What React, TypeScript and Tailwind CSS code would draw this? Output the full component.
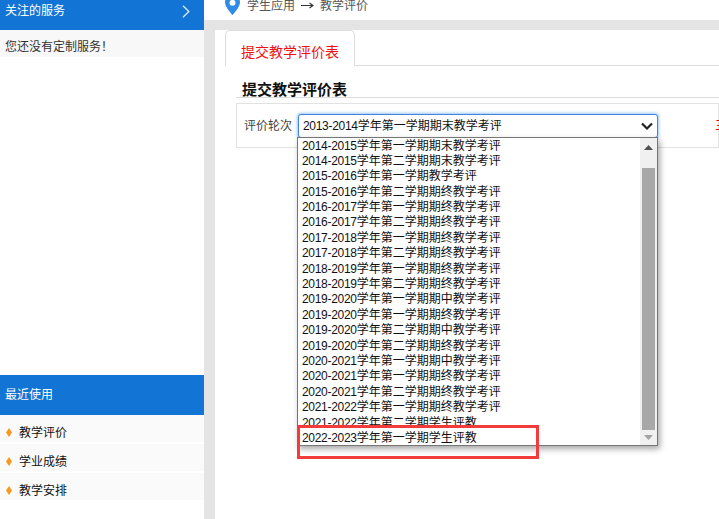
const FONT = "font-['Liberation_Sans','Noto_Sans_CJK_SC',sans-serif]"

const terms = [
  '2014-2015学年第一学期期末教学考评',
  '2014-2015学年第二学期期末教学考评',
  '2015-2016学年第一学期教学考评',
  '2015-2016学年第二学期期终教学考评',
  '2016-2017学年第一学期期终教学考评',
  '2016-2017学年第二学期期终教学考评',
  '2017-2018学年第一学期期终教学考评',
  '2017-2018学年第二学期期终教学考评',
  '2018-2019学年第一学期期终教学考评',
  '2018-2019学年第二学期期终教学考评',
  '2019-2020学年第一学期期中教学考评',
  '2019-2020学年第一学期期终教学考评',
  '2019-2020学年第二学期期中教学考评',
  '2019-2020学年第二学期期终教学考评',
  '2020-2021学年第一学期期中教学考评',
  '2020-2021学年第一学期期终教学考评',
  '2020-2021学年第二学期期终教学考评',
  '2021-2022学年第一学期期终教学考评',
  '2021-2022学年第二学期学生评教',
  '2022-2023学年第一学期学生评教',
]

function Term({ text }: { text: string }) {
  return (
    <>
      <span className="tracking-[-0.3px]">{text.slice(0, 9)}</span>
      {text.slice(9)}
    </>
  )
}

function Sidebar() {
  return (
    <div className="w-[204px] shrink-0 flex flex-col pb-[19px] bg-white">
      <div className="h-[30px] bg-[#1274d5] flex justify-between pl-[5px] pr-[14px] text-white">
        <span className="leading-[22px]">关注的服务</span>
        <svg width="8" height="13" viewBox="0 0 8 13" className="mt-[5px]" fill="none" stroke="#d5e7f8" strokeWidth="1.4">
          <path d="M1 .8l5.8 5.7L1 12.2" />
        </svg>
      </div>
      <div className="h-[27px] bg-[#f8f8f8] pl-[5px] leading-[34px] text-[#333]">您还没有定制服务！</div>
      <div className="flex-1" />
      <div className="h-[40px] bg-[#1274d5] pl-[5px] leading-[41px] text-white">最近使用</div>
      <div className="flex flex-col gap-[2px]">
        {['教学评价', '学业成绩', '教学安排'].map(name => (
          <div key={name} className="h-[27px] bg-[#fafafa] flex items-center pl-[6px] pt-[8px] text-[#111]">
            <span className="w-[6px] h-[9px] bg-[#f59a1c] mr-[7px] [clip-path:polygon(50%_0,100%_50%,50%_100%,0_50%)]" />
            {name}
          </div>
        ))}
      </div>
    </div>
  )
}

function Dropdown() {
  return (
    <div className="absolute left-[-2px] top-full w-[361px] h-[309px] bg-white border border-[#767676] shadow-[2px_3px_6px_rgba(0,0,0,0.35)] flex">
      <div className="flex-1 overflow-hidden pl-[4px] pt-[1px] text-[#111]">
        {terms.map(t => (
          <div key={t} className="h-[15.4px] leading-[15px] whitespace-nowrap"><Term text={t} /></div>
        ))}
      </div>
      <div className="w-[17px] bg-[#f0f0f0] flex flex-col items-center">
        <svg width="9" height="5" viewBox="0 0 9 5" className="mt-[7px]"><path d="M4.5 0L9 5H0z" fill="#505050" /></svg>
        <div className="w-[13px] h-[262px] bg-[#a8a8a8] mt-[18px]" />
        <svg width="9" height="5" viewBox="0 0 9 5" className="mt-[5px]"><path d="M0 0h9L4.5 5z" fill="#a3a3a3" /></svg>
      </div>
      {/* red annotation box drawn over the list */}
      <div className="absolute left-[-1px] top-[287px] w-[242px] h-[34px] border-[3px] border-[#f33b3b]" />
    </div>
  )
}

export default function App() {
  return (
    <div className={`w-[719px] h-[519px] flex overflow-hidden bg-white text-[12px] ${FONT}`}>
      <Sidebar />
      <div className="flex-1 min-w-0 flex flex-col">
        <div className="h-[20px] shrink-0 flex items-start pl-[21px] text-[#555] leading-[12px] overflow-hidden">
          <svg width="15" height="20" viewBox="0 0 15 20" className="-mt-[5px] shrink-0">
            <path fillRule="evenodd" fill="#2f8be6" d="M7.5 0C3.4 0 0 3.3 0 7.4 0 12 7.5 20 7.5 20S15 12 15 7.4C15 3.3 11.6 0 7.5 0zm0 4.8a3 3 0 1 1 0 6 3 3 0 0 1 0-6z" />
          </svg>
          <span className="ml-[7px]">学生应用</span>
          <svg width="13" height="7" viewBox="0 0 13 7" className="ml-[6px] mt-[2px] shrink-0" fill="none" stroke="#333" strokeWidth="1.1">
            <path d="M0 3.5h12M8.5 1l3.5 2.5L8.5 6" />
          </svg>
          <span className="ml-[6px]">教学评价</span>
        </div>
        <div className="flex-1 min-h-0 flex flex-col bg-[#e4e4e4] pt-[10px] pl-[11px]">
          <div className="flex-1 min-h-0 bg-white pl-[10px]">
            <div className="flex h-[36px] border-b border-[#ddd]">
              <div className="w-[130px] h-[36px] bg-white border border-b-0 border-[#ddd] rounded-t-[5px] text-[14px] text-[#f01010] pl-[15px] pt-[12px] leading-[18px]">
                提交教学评价表
              </div>
            </div>
            <div className="ml-[11px]">
              <div className="h-[32px] border-b border-[#ddd] pl-[6px] pt-[15px] text-[15px] leading-[17px] font-bold text-[#111]">
                提交教学评价表
              </div>
              <div className="mt-[5px] h-[45px] border border-[#e2e2e2] flex items-center pl-[7px]">
                <span className="w-[54px] shrink-0 text-[#444]">评价轮次</span>
                <div className="relative w-[360px] h-[24px] shrink-0 border border-[#3f86d8] rounded-[3px] shadow-[0_0_3px_1px_rgba(90,160,240,0.6)] flex items-center justify-between pl-[4px] pr-[3px] text-[#111] bg-white">
                  <span><Term text="2013-2014学年第一学期期末教学考评" /></span>
                  <svg width="14" height="8" viewBox="0 0 14 8" fill="none" stroke="#222" strokeWidth="2.2"><path d="M2 1.5l5 5 5-5" /></svg>
                  <Dropdown />
                </div>
                <span className="ml-[57px] shrink-0 text-[#f00000]">三</span>
              </div>
            </div>
          </div>
        </div>
      </div>
    </div>
  )
}
